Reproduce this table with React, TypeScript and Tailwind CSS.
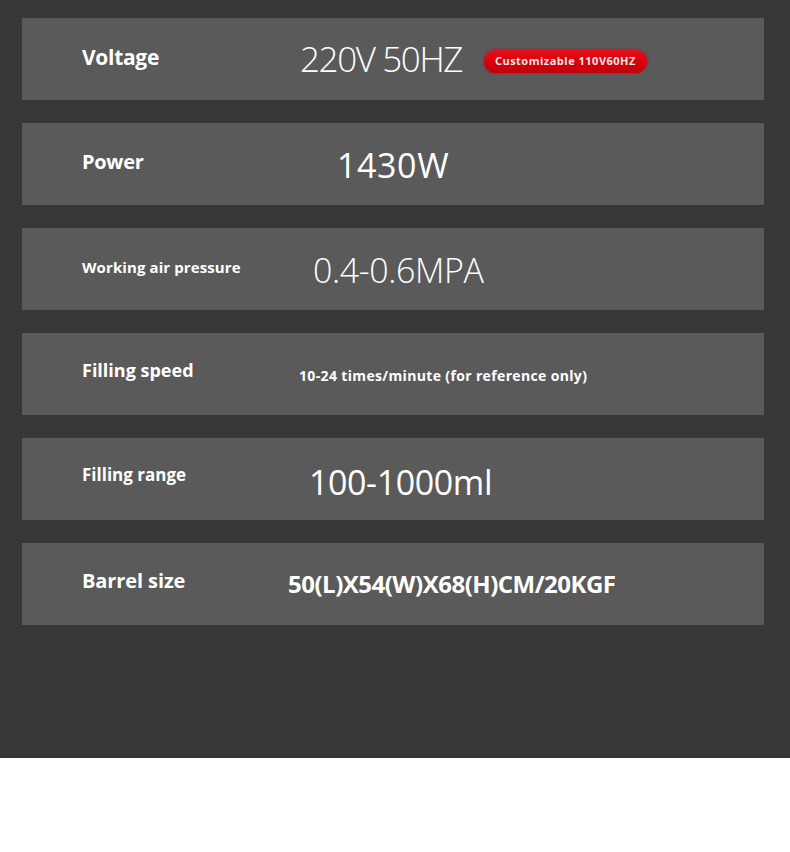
const rows = [
  {
    label: "Voltage",
    labelClass: "w-[218px] text-[21px] font-bold tracking-[-0.3px] pb-[2px]",
    value: "220V 50HZ",
    valueClass: "text-[35px] font-light tracking-[-1.4px]",
    badge: true,
  },
  {
    label: "Power",
    labelClass: "w-[255px] text-[20px] font-bold tracking-[-0.3px] pb-[4px]",
    value: "1430W",
    valueClass: "text-[34px] font-medium tracking-[0.6px] pt-[2px]",
  },
  {
    label: "Working air pressure",
    labelClass: "w-[231px] text-[15px] font-bold tracking-[0.1px] pb-[3px]",
    value: "0.4-0.6MPA",
    valueClass: "text-[34px] font-light tracking-[-0.4px] pt-[2px]",
  },
  {
    label: "Filling speed",
    labelClass: "w-[217px] text-[18px] font-bold pb-[8px]",
    value: "10-24 times/minute (for reference only)",
    valueClass: "text-[14px] font-bold tracking-[0.35px] pt-[2px]",
  },
  {
    label: "Filling range",
    labelClass: "w-[227px] text-[17px] font-bold pb-[8px]",
    value: "100-1000ml",
    valueClass: "text-[34px] font-normal tracking-[-0.4px] pt-[6px]",
  },
  {
    label: "Barrel size",
    labelClass: "w-[206px] text-[20px] font-bold tracking-[-0.1px] pb-[6px]",
    value: "50(L)X54(W)X68(H)CM/20KGF",
    valueClass: "text-[24px] font-bold tracking-[-0.5px]",
  },
];

function Badge() {
  return (
    <div className="relative ml-[22px] mt-[4px]">
      {/* teal swoosh under the pill */}
      <div className="absolute left-[12px] right-[4px] top-[17px] h-[8px] rounded-[50%] bg-[#4f7478] opacity-70 blur-[2px]"></div>
      <div className="relative h-[23px] w-[163px] rounded-full bg-gradient-to-b from-[#e4101a] via-[#d8000c] to-[#c2000a] shadow-[0_0_3px_#d0000c] flex items-center justify-center">
        <span className="text-[11px] font-bold tracking-[0.5px] text-[#f4e6e6]">Customizable 110V60HZ</span>
      </div>
    </div>
  );
}

export default function App() {
  return (
    <div className="w-[790px] h-[852px] bg-white font-['Open_Sans',sans-serif]">
      <div className="h-[758px] bg-[#373737] px-[22px] pt-[18px] pr-[26px] flex flex-col gap-[23px]">
        {rows.map((row) => (
          <div key={row.label} className="h-[82px] bg-[#5a5a5a] pl-[60px] flex items-center text-white">
            <div className={row.labelClass}>{row.label}</div>
            <div className={"whitespace-nowrap " + row.valueClass}>{row.value}</div>
            {row.badge && <Badge />}
          </div>
        ))}
      </div>
    </div>
  );
}
